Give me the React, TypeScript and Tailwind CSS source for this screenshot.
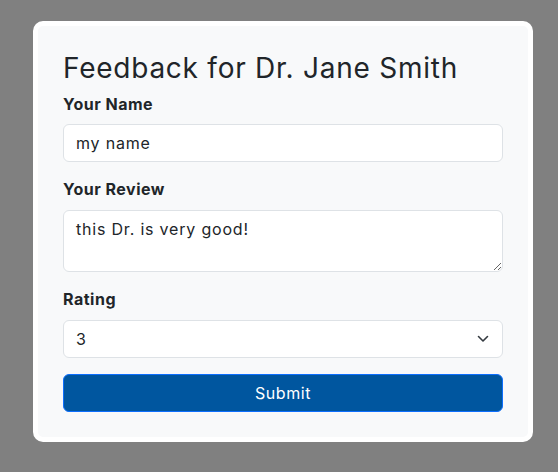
import React, { useState } from 'react';

export default function App() {
  const [name, setName] = useState('my name');
  const [review, setReview] = useState('this Dr. is very good!');
  const [rating, setRating] = useState('3');

  return (
    <div
      className="min-h-[472px] w-full bg-[#808080] pt-[21px] pl-[33px]"
      style={{ fontFamily: '"Inter", "Liberation Sans", sans-serif' }}
    >
      <form
        className="w-[500px] rounded-[10px] border-[5px] border-white bg-[#f8f9fa] px-[25px] pt-[25px] pb-[25px] text-[#212529]"
        onSubmit={e => e.preventDefault()}
      >
        <h2 className="mb-[8px] text-[28px] leading-[34px] font-normal tracking-[0.75px]">Feedback for Dr. Jane Smith</h2>

        {/* Name */}
        <div className="mb-[16px]">
          <label className="mb-[9px] block text-[16px] leading-[22px] font-bold tracking-[0.5px]">Your Name</label>
          <input
            className="block h-[38px] w-full rounded-[6px] border border-[#dee2e6] bg-white px-[12px] text-[16px] tracking-[0.8px] text-[#212529] outline-none"
            value={name}
            onChange={e => setName(e.target.value)}
          />
        </div>

        {/* Review */}
        <div className="mb-[16px]">
          <label className="mb-[10px] block text-[16px] leading-[22px] font-bold tracking-[0.5px]">Your Review</label>
          <textarea
            className="block h-[62px] w-full rounded-[6px] border border-[#dee2e6] bg-white px-[12px] py-[6px] text-[16px] leading-[24px] tracking-[0.8px] text-[#212529] outline-none"
            value={review}
            onChange={e => setReview(e.target.value)}
          />
        </div>

        {/* Rating */}
        <div className="mb-[16px]">
          <label className="mb-[10px] block text-[16px] leading-[22px] font-bold tracking-[0.5px]">Rating</label>
          <div className="relative">
            <select
              className="block h-[38px] w-full appearance-none rounded-[6px] border border-[#dee2e6] bg-white px-[12px] text-[16px] text-[#212529] outline-none"
              value={rating}
              onChange={e => setRating(e.target.value)}
            >
              {['1', '2', '3', '4', '5'].map(r => (
                <option key={r} value={r}>{r}</option>
              ))}
            </select>
            <svg
              className="pointer-events-none absolute top-[14px] right-[14px]"
              width="12"
              height="9"
              viewBox="0 0 12 9"
              fill="none"
            >
              <path d="M1.5 2.5 L6 7 L10.5 2.5" stroke="#343a40" strokeWidth="1.6" strokeLinecap="round" strokeLinejoin="round" />
            </svg>
          </div>
        </div>

        <button
          type="submit"
          className="block h-[38px] w-full rounded-[6px] border border-[#0d6efd] bg-[#00569f] text-[16px] tracking-[0.6px] text-white"
        >
          Submit
        </button>
      </form>
    </div>
  );
}
